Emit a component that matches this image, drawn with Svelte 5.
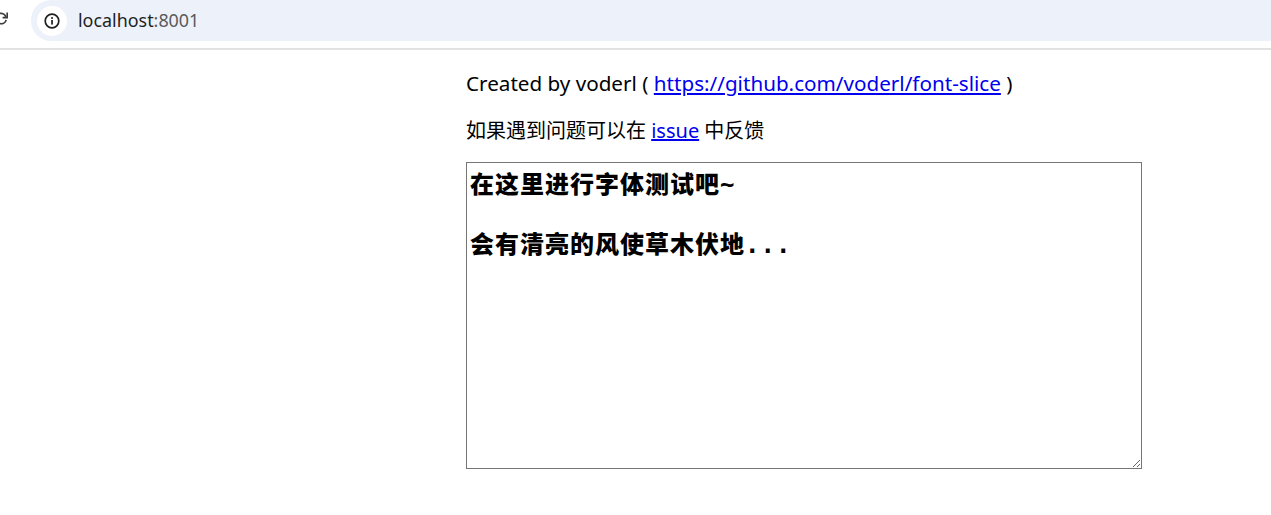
<script>
	let text = $state('在这里进行字体测试吧~\n\n会有清亮的风使草木伏地...');
</script>

<div class="page">
	<header class="toolbar">
		<svg class="reload" width="8" height="15" viewBox="0 0 8 15" aria-hidden="true">
			<path d="M0 2.4 A5.4 5.4 0 0 1 6 6.4 M0 12.6 A5.4 5.4 0 0 0 6.2 9" fill="none" stroke="#3c3c3c" stroke-width="1.7" />
			<path d="M2.6 6.6 H7.2 V1.4" fill="none" stroke="#3c3c3c" stroke-width="1.7" />
		</svg>
		<div class="omnibox">
			<span class="site-info">
				<svg width="18" height="18" viewBox="0 0 18 18" aria-hidden="true">
					<circle cx="9" cy="9" r="6.8" fill="none" stroke="#1f1f1f" stroke-width="1.7" />
					<rect x="8.2" y="8" width="1.7" height="4.6" fill="#1f1f1f" />
					<rect x="8.2" y="5.1" width="1.7" height="1.8" fill="#1f1f1f" />
				</svg>
			</span>
			<span class="url">localhost<span class="port">:8001</span></span>
		</div>
	</header>

	<main class="content">
		<p class="credit">
			Created by voderl ( <a href="https://github.com/voderl/font-slice">https://github.com/voderl/font-slice</a> )
		</p>
		<p class="feedback">
			如果遇到问题可以在 <a href="https://github.com/voderl/font-slice/issues">issue</a> 中反馈
		</p>
		<textarea class="tester" bind:value={text}></textarea>
	</main>
</div>

<style>
	:global(body) {
		background: #fff;
		font-family: "Noto Sans", "Noto Sans CJK SC", sans-serif;
	}

	.toolbar {
		display: flex;
		align-items: flex-start;
		height: 48px;
		border-bottom: 2px solid #e2e2e2;
		overflow: hidden;
	}

	.reload {
		flex: none;
		width: 8px;
		margin: 11px 23px 0 0;
	}

	.omnibox {
		flex: 1;
		display: flex;
		align-items: center;
		height: 41px;
		padding-left: 6px;
		background: #edf2fa;
		border-radius: 20px 0 0 20px;
	}

	.site-info {
		display: flex;
		align-items: center;
		justify-content: center;
		width: 30px;
		height: 30px;
		border-radius: 50%;
		background: #fff;
	}

	.url {
		margin: -2px 0 0 11px;
		font-size: 17.9px;
		color: #1f1f1f;
	}

	.port {
		color: #5a5a5a;
	}

	.content {
		display: flex;
		flex-direction: column;
		align-items: flex-start;
		padding-left: 466px;
		color: #000;
		font-size: 20px;
	}

	p {
		margin: 0;
		line-height: 27px;
	}

	.credit {
		margin-top: 20px;
		font-size: 20.65px;
	}

	.feedback {
		margin-top: 20px;
	}

	.tester {
		box-sizing: border-box;
		width: 676px;
		height: 307px;
		margin-top: 18px;
		padding: 7px 3px;
		border: 1px solid #767676;
		font-family: "DejaVu Sans Mono", "Noto Sans CJK SC", sans-serif;
		font-size: 24px;
		font-weight: 900;
		letter-spacing: 1px;
		line-height: 30px;
		outline: none;
	}
</style>
